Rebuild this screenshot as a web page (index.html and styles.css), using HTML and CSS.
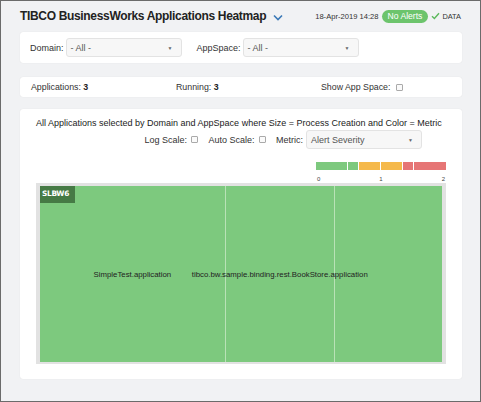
FILE: index.html
```html
<!DOCTYPE html>
<html>
<head>
<meta charset="utf-8">
<link rel="stylesheet" href="styles.css">
</head>
<body>
<div class="page">
  <div class="header">
    <div class="title">TIBCO BusinessWorks Applications Heatmap</div>
    <svg class="chevron" width="10" height="7" viewBox="0 0 10 7"><path d="M1 1.5 L5 5.5 L9 1.5" fill="none" stroke="#3b79b7" stroke-width="1.6"/></svg>
    <div class="spacer"></div>
    <div class="date">18-Apr-2019 14:28</div>
    <div class="pill">No Alerts</div>
    <svg class="check" width="9" height="8" viewBox="0 0 9 8"><path d="M1 4.2 L3.4 6.5 L8 1.2" fill="none" stroke="#5cb85c" stroke-width="1.4"/></svg>
    <div class="data">DATA</div>
  </div>

  <div class="card filters">
    <span class="label">Domain:</span>
    <div class="select w115"><span>- All -</span><span class="arrow">▼</span></div>
    <span class="label gap">AppSpace:</span>
    <div class="select w115"><span>- All -</span><span class="arrow">▼</span></div>
  </div>

  <div class="card stats">
    <div class="stat">Applications: <b>3</b></div>
    <div class="stat">Running: <b>3</b></div>
    <div class="stat">Show App Space: <span class="cb"></span></div>
  </div>

  <div class="card main">
    <div class="desc">All Applications selected by Domain and AppSpace where Size = Process Creation and Color = Metric</div>
    <div class="controls">
      <span class="ctl">Log Scale: <span class="cb"></span></span>
      <span class="ctl">Auto Scale: <span class="cb"></span></span>
      <span class="ctl">Metric:</span>
      <div class="select metric"><span>Alert Severity</span><span class="arrow">▼</span></div>
    </div>
    <div class="legend">
      <div class="bar">
        <div class="seg g" style="width:32px"></div>
        <div class="seg g" style="width:10px"></div>
        <div class="seg o" style="width:21px"></div>
        <div class="seg o" style="width:22px"></div>
        <div class="seg r" style="width:10px"></div>
        <div class="seg r" style="width:33px"></div>
      </div>
      <div class="ticks"><span>0</span><span>1</span><span>2</span></div>
    </div>
    <div class="heatmap">
      <div class="group">
        <div class="cell" style="width:186px"><span class="cname">SimpleTest.application</span></div>
        <div class="cell" style="width:108px"><span class="cname">tibco.bw.sample.binding.rest.BookStore.application</span></div>
        <div class="cell" style="width:108px"></div>
        <div class="glabel">SLBW6</div>
      </div>
    </div>
  </div>
</div>
</body>
</html>
```
FILE: styles.css
```css
* { box-sizing: border-box; }
html, body { margin: 0; padding: 0; }
body {
  font-family: "Liberation Sans", Arial, sans-serif;
  color: #333;
}
.page {
  width: 481px;
  height: 402px;
  border: 1px solid #6b6b6b;
  background: #f1f2f4;
  padding: 0 18px 0 19px;
  display: flex;
  flex-direction: column;
}
.header {
  height: 31px;
  display: flex;
  align-items: center;
  padding-bottom: 1px;
}
.title {
  font-weight: bold;
  font-size: 12px;
  color: #222;
  letter-spacing: -0.33px;
}
.chevron { margin-left: 7px; margin-top: 2px; }
.spacer { flex: 1; }
.date { font-size: 7.6px; color: #333; }
.pill {
  margin-left: 3px;
  background: #6cc46c;
  color: #fff;
  font-size: 8.6px;
  height: 13px;
  line-height: 13px;
  padding: 0 6px;
  border-radius: 7px;
}
.check { margin-left: 3px; }
.data { font-size: 7.4px; margin-left: 2px; margin-right: 1px; color: #333; }

.card {
  background: #fff;
  border-radius: 3px;
  box-shadow: 0 0 1px rgba(0,0,0,0.12);
}
.filters {
  height: 31px;
  display: flex;
  align-items: center;
  padding-left: 10px;
  font-size: 9px;
}
.label { color: #333; margin-right: 2px; }
.label.gap { margin-left: 15px; margin-right: 2px; }
.select {
  height: 19px;
  background: #f7f7f7;
  border: 1px solid #e3e3e3;
  border-radius: 3px;
  display: flex;
  align-items: center;
  justify-content: space-between;
  padding: 0 8px 0 4px;
  color: #555;
  font-size: 9px;
}
.w115 { width: 116px; }
.arrow { font-size: 5px; color: #666; }

.stats {
  margin-top: 14px;
  height: 20px;
  display: flex;
  align-items: center;
  padding-left: 11px;
  font-size: 8.8px;
}
.stat:nth-child(1) { width: 145px; }
.stat:nth-child(2) { width: 145px; }
.stat { display: flex; align-items: center; white-space: pre; }
.stat b { color: #222; }
.cb {
  display: inline-block;
  width: 7px;
  height: 7px;
  border: 1px solid #aaa;
  border-radius: 1px;
  background: #fafafa;
  margin-left: 3px;
  vertical-align: middle;
}

.main {
  margin-top: 12px;
  height: 270px;
  padding: 9px 16px 0 16px;
  display: flex;
  flex-direction: column;
}
.desc {
  font-size: 9px;
  text-align: center;
  color: #222;
  white-space: nowrap;
  padding-right: 7px;
}
.controls {
  margin-top: 2px;
  display: flex;
  align-items: center;
  justify-content: flex-end;
  padding-right: 24px;
  font-size: 9px;
  height: 19px;
}
.ctl { margin-left: 10px; display: flex; align-items: center; white-space: pre; }
.ctl:first-child { margin-left: 0; }
.ctl .cb { margin-left: 2px; }
.select.metric { width: 116px; margin-left: 3px; }
.legend {
  align-self: flex-end;
  width: 130px;
  margin-top: 13px;
  margin-right: 0;
}
.bar { display: flex; height: 8px; gap: 1px; background: #fff; }
.seg { height: 8px; }
.seg.g { background: #7dc97e; }
.seg.o { background: #f5b94b; }
.seg.r { background: #e67575; }
.ticks {
  display: flex;
  justify-content: space-between;
  font-size: 6px;
  color: #444;
  margin-top: 6px;
  padding: 0 1px;
}
.heatmap {
  margin-top: 1px;
  height: 181px;
  background: #e2e2e2;
  padding: 3px 4px 2px 4px;
}
.group {
  position: relative;
  display: flex;
  height: 100%;
  gap: 1px;
  background: #b9e2b6;
}
.cell {
  background: #7dc97e;
  height: 100%;
  display: flex;
  align-items: center;
  justify-content: center;
  overflow: visible;
  position: relative;
}
.cname {
  white-space: nowrap;
  font-size: 7.8px;
  color: #222;
  position: relative;
  z-index: 2;
  margin-top: 1px;
}
.glabel {
  position: absolute;
  left: 0;
  top: 0;
  background: #467a45;
  color: #fff;
  font-weight: bold;
  font-size: 7.4px;
  padding: 3px 3px 3px 2px;
  height: 17px;
  width: 35px;
  font-family: "DejaVu Sans", sans-serif;
  letter-spacing: -0.3px;
}
```
